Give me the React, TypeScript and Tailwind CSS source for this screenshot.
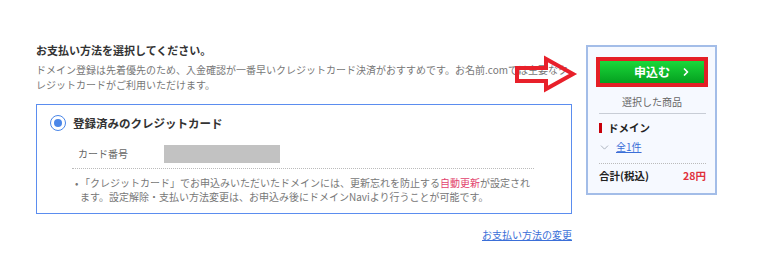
import { ChevronDown, ChevronRight } from "lucide-react";

const FONT = "font-['Noto_Sans_CJK_JP','Noto_Sans',sans-serif]";

function PaymentBox() {
  return (
    <div className="mt-[12px] border border-[#5b8def] pl-[13px] pb-[9px]">
      {/* selected option */}
      <div className="flex items-center gap-[7px] pt-[9px]">
        <span className="flex h-[16px] w-[16px] items-center justify-center rounded-full border-[1.5px] border-[#4a86e8] bg-white">
          <span className="h-[8px] w-[8px] rounded-full bg-[#4a86e8]" />
        </span>
        <span className="text-[11.5px] leading-[18px] font-bold text-[#333]">
          登録済みのクレジットカード
        </span>
      </div>

      <div className="mt-[13px] flex items-center pl-[28px]">
        <span className="w-[86px] text-[10px] leading-[18px] text-[#666]">カード番号</span>
        <span className="h-[18px] w-[116px] bg-[#c2c2c2]" />
      </div>

      <div className="mt-[5px] mr-[37px] ml-[22px] border-t border-dotted border-[#bbb] pt-[7px]">
        <div className="flex text-[10px] leading-[14px] text-[#777]">
          <span className="w-[8px] shrink-0 pl-[3px]">•</span>
          <p>
            「クレジットカード」でお申込みいただいたドメインには、更新忘れを防止する
            <span className="text-[#e2426e]">自動更新</span>が設定され
            <br />
            ます。設定解除・支払い方法変更は、お申込み後にドメインNaviより行うことが可能です。
          </p>
        </div>
      </div>
    </div>
  );
}

function OrderPanel() {
  return (
    <aside className="mt-[3px] w-[131px] shrink-0 border-2 border-[#a3bde8] bg-[#f6f9ff] pt-[10px] pr-[7px] pb-[9px] pl-[8px]">
      <button className="block h-[30px] w-full border-4 border-[#e41e26]">
        <span className="grid h-full grid-cols-[1fr_auto_1fr] items-center bg-gradient-to-b from-[#1ad83a] to-[#05a020] text-white">
          <span />
          <span className="text-[12px] leading-none font-bold">申込む</span>
          <span className="flex justify-end pr-[12px]">
            <ChevronRight size={12} strokeWidth={3.5} />
          </span>
        </span>
      </button>

      <p className="mt-[8px] text-center text-[10px] leading-[14px] text-[#666]">選択した商品</p>

      <div className="mt-[4px] mr-[2px] ml-[3px] border-t border-[#c8cdd6]">
        <div className="mt-[6px] flex items-center gap-[6px]">
          <span className="h-[10px] w-[3px] bg-[#c8000a]" />
          <span className="text-[10.5px] leading-[16px] font-bold text-[#222]">ドメイン</span>
        </div>
        <div className="mt-[3px] flex items-center gap-[5px] text-[10px] leading-[16px]">
          <ChevronDown size={13} strokeWidth={1.5} className="-ml-[1px] text-[#9aa3b0]" />
          <a className="text-[#3b6fd8] underline">全1件</a>
        </div>
        <div className="mt-[8px] flex items-center justify-between border-t border-dotted border-[#bbb] pt-[4px] text-[10.5px] leading-[16px] font-bold">
          <span className="text-[#222]">合計(税込)</span>
          <span className="text-[#e0303a]">28円</span>
        </div>
      </div>
    </aside>
  );
}

export default function App() {
  return (
    <div className={`relative h-[280px] w-[765px] overflow-hidden bg-white ${FONT}`}>
      <div className="flex items-start gap-[14px] pt-[42px] pl-[36px]">
        <main className="w-[536px] shrink-0">
          <h2 className="text-[11px] leading-[16px] font-bold text-[#333]">
            お支払い方法を選択してください。
          </h2>
          <p className="mt-[4px] text-[10px] leading-[15px] text-[#777]">
            ドメイン登録は先着優先のため、入金確認が一番早いクレジットカード決済がおすすめです。お名前.comでは主要なク
            <br />
            レジットカードがご利用いただけます。
          </p>

          <PaymentBox />

          <div className="mt-[14px] flex justify-end">
            <a className="text-[10px] leading-[14px] text-[#3b6fd8] underline">お支払い方法の変更</a>
          </div>
        </main>

        <OrderPanel />
      </div>

      {/* annotation arrow drawn on top of the page */}
      <svg
        className="pointer-events-none absolute top-0 left-0"
        width="765"
        height="280"
        viewBox="0 0 765 280"
      >
        <path
          d="M517 68 L546 68 L546 59 L573 74 L546 89 L546 81 L517 81 Z"
          fill="none"
          stroke="#e8202a"
          strokeWidth="4"
          strokeLinejoin="miter"
        />
      </svg>
    </div>
  );
}
